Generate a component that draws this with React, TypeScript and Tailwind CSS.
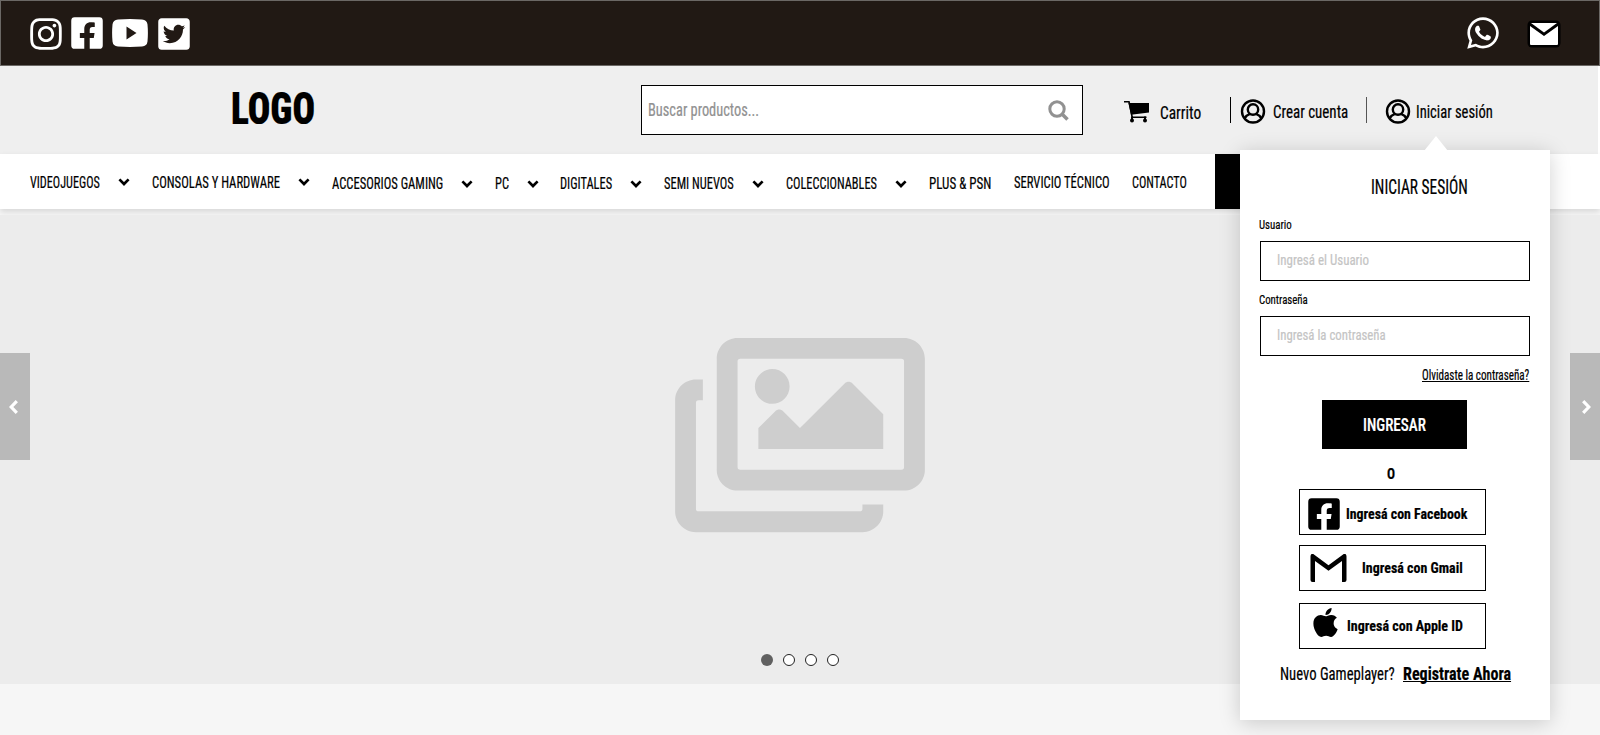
import { useLayoutEffect, useRef, useState } from "react";
import type { ReactNode } from "react";
import { FaApple, FaFacebookSquare, FaInstagram, FaRegImages, FaTwitterSquare, FaWhatsapp } from "react-icons/fa";

/** Narrow label: squeezes its text horizontally into the width set by its class. */
function Label({ className, children }: { className: string; children: ReactNode }) {
  const outer = useRef<HTMLSpanElement>(null);
  const inner = useRef<HTMLSpanElement>(null);
  const [scale, setScale] = useState(1);
  useLayoutEffect(() => {
    if (outer.current && inner.current) setScale(outer.current.clientWidth / inner.current.offsetWidth);
  }, []);
  return (
    <span ref={outer} className={`flex shrink-0 ${className}`}>
      <span ref={inner} className="shrink-0 origin-left whitespace-nowrap" style={{ transform: `scaleX(${scale})` }}>
        {children}
      </span>
    </span>
  );
}

function Chevron({ className }: { className: string }) {
  return (
    <svg viewBox="0 0 12 8" className={`h-2 w-3 shrink-0 ${className}`} fill="none" stroke="black" strokeWidth="2.7">
      <path d="M1.400 1.400 6 6 10.600 1.400" />
    </svg>
  );
}

function UserIcon({ className }: { className: string }) {
  return (
    <svg viewBox="0 0 26 26" className={`size-[26px] shrink-0 ${className}`} fill="none" stroke="black" strokeWidth="2.4">
      <circle cx="13" cy="12.500" r="11" />
      <circle cx="13" cy="10.500" r="5.200" />
      <path d="M4.600 19.500c1.200-2.400 3-3.800 5.400-4.600M21.400 19.500c-1.200-2.400-3-3.800-5.400-4.600" />
    </svg>
  );
}

function YoutubeIcon() {
  return (
    <svg viewBox="0 0 36 28" className="ml-[7px] h-7 w-9 shrink-0">
      <path
        fill="white"
        fillRule="evenodd"
        d="M6 .5Q18-.3 30 .5Q35 1 35.500 5.500Q36.300 14 35.500 22.500Q35 27 30 27.500Q18 28.300 6 27.500Q1 27 .5 22.500Q-.3 14 .5 5.500Q1 1 6 .5ZM14.500 7.500V20.500L24.500 14Z"
      />
    </svg>
  );
}

function MailIcon() {
  return (
    <svg viewBox="0 0 34 28" className="ml-[26px] mt-[2px] h-7 w-[34px] shrink-0">
      <rect x=".5" y=".5" width="33" height="27" rx="4.500" fill="black" />
      <path d="M4 3H30L17 12.500Z" fill="white" />
      <path d="M3 6 17 16 31 6V24Q31 25 30 25H4Q3 25 3 24Z" fill="white" />
    </svg>
  );
}

function CartIcon() {
  return (
    <svg viewBox="0 0 25 22" className="ml-[41px] mt-[4px] h-[22px] w-[25px] shrink-0">
      <path d="M0 .8H5L8.200 16.200H22.500" fill="none" stroke="black" strokeWidth="1.600" />
      <path d="M4.500 2H25V11.500L7 13.800Z" />
      <circle cx="8" cy="19.600" r="2" />
      <circle cx="21" cy="19.600" r="2" />
      <path d="M7 15.400H9V19H7ZM20 15.400H22V19H20Z" />
    </svg>
  );
}

function GmailIcon() {
  return (
    <svg viewBox="0 0 37 28" className="h-7 w-[37px] shrink-0">
      <path d="M2.500 28Q.5 28 .5 26V2.500Q.5-.5 3-.2L18.500 11.200 34-.2Q36.500-.5 36.500 2.500V26Q36.500 28 34.500 28H32V7L18.500 16.800 5 7V28Z" />
    </svg>
  );
}

function Arrow({ right = false }: { right?: boolean }) {
  return (
    <button className={`mt-[138px] flex h-[107px] w-[30px] items-center self-start bg-[#b9b9b9] ${right ? "pl-3" : "pl-[9px]"}`}>
      <svg viewBox="0 0 9 14" className="h-[14px] w-[9px]" fill="none" stroke="white" strokeWidth="3.2">
        <path d={right ? "M1.200 1.200 6.800 7 1.200 12.800" : "M7.800 1.200 2.200 7 7.800 12.800"} />
      </svg>
    </button>
  );
}

const nav = [
  { text: "VIDEOJUEGOS", box: "ml-[30px] mt-[3px] w-[70px]", chevron: "ml-[18px] mt-px" },
  { text: "CONSOLAS Y HARDWARE", box: "ml-[22px] mt-[3px] w-[128px]", chevron: "ml-[18px] mt-px" },
  { text: "ACCESORIOS GAMING", box: "ml-[22px] mt-[5px] w-[111px]", chevron: "ml-[18px] mt-[5px]" },
  { text: "PC", box: "ml-[22px] mt-[5px] w-[14px]", chevron: "ml-[18px] mt-[5px]" },
  { text: "DIGITALES", box: "ml-[21px] mt-[5px] w-[52px]", chevron: "ml-[18px] mt-[5px]" },
  { text: "SEMI NUEVOS", box: "ml-[22px] mt-[5px] w-[70px]", chevron: "ml-[18px] mt-[5px]" },
  { text: "COLECCIONABLES", box: "ml-[22px] mt-[5px] w-[91px]", chevron: "ml-[18px] mt-[5px]" },
  { text: "PLUS & PSN", box: "ml-[22px] mt-[5px] w-[62px]" },
  { text: "SERVICIO TÉCNICO", box: "ml-[23px] mt-[3px] w-[96px]" },
  { text: "CONTACTO", box: "ml-[22px] mt-[3px] w-[55px]" },
];

function LoginPanel() {
  return (
    <section className="absolute left-[1240px] top-[150px] flex h-[570px] w-[310px] flex-col bg-white shadow-[0_3px_20px_rgba(0,0,0,0.18)]">
      <svg viewBox="0 0 24 15" className="absolute -top-[14px] left-[184px] h-[15px] w-6">
        <path d="M12 0 24 15H0Z" fill="white" />
      </svg>
      <Label className="ml-[131px] mt-[27px] h-5 w-[97px] text-[20px] leading-5">INICIAR SESIÓN</Label>
      <Label className="ml-[19px] mt-[19px] h-4 w-[33px] text-[13.500px] leading-4">Usuario</Label>
      <div className="ml-5 mt-[9px] flex h-10 w-[270px] items-center border border-black pl-4">
        <Label className="-mt-[3px] w-[92px] text-[15.500px] leading-5 text-[#c4c4c4]">Ingresá el Usuario</Label>
      </div>
      <Label className="ml-[19px] mt-[10px] h-4 w-[49px] text-[13.500px] leading-4">Contraseña</Label>
      <div className="ml-5 mt-[9px] flex h-10 w-[270px] items-center border border-black pl-4">
        <Label className="-mt-[3px] w-[109px] text-[15.500px] leading-5 text-[#c4c4c4]">Ingresá la contraseña</Label>
      </div>
      <Label className="ml-[182px] mt-[11px] h-4 w-[107px] text-[14px] leading-4 underline decoration-1 underline-offset-1 [text-decoration-skip-ink:none]">
        Olvidaste la contraseña?
      </Label>
      <button className="ml-[82px] mt-[17px] flex h-[49px] w-[145px] items-center bg-black pl-[41px] text-white">
        <Label className="w-[63px] text-[18px] font-medium leading-6">INGRESAR</Label>
      </button>
      <Label className="ml-[147px] mt-[17px] h-4 w-2 text-[15px] font-bold leading-4">O</Label>
      <button className="ml-[59px] mt-[7px] flex h-[46px] w-[187px] items-center border border-black pl-[6px]">
        <FaFacebookSquare className="mt-[3px] size-[36px] shrink-0" />
        <Label className="ml-1 mt-[3px] w-[121px] text-[15.500px] font-bold leading-5">Ingresá con Facebook</Label>
      </button>
      <button className="ml-[59px] mt-[10px] flex h-[46px] w-[187px] items-center border border-black pl-[10px]">
        <GmailIcon />
        <Label className="-mt-px ml-[15px] w-[101px] text-[15.500px] font-bold leading-5">Ingresá con Gmail</Label>
      </button>
      <button className="ml-[59px] mt-3 flex h-[46px] w-[187px] items-center border border-black pl-[9px]">
        <FaApple className="-mt-[7px] size-[33px] shrink-0" />
        <Label className="-mt-px ml-[5px] w-[116px] text-[15.500px] font-bold leading-5">Ingresá con Apple ID</Label>
      </button>
      <div className="ml-10 mt-[13px] flex">
        <Label className="w-[115px] text-[18px] leading-6">Nuevo Gameplayer?</Label>
        <Label className="ml-2 w-[108px] text-[18px] font-bold leading-6 underline decoration-1 underline-offset-1 [text-decoration-skip-ink:none]">
          Registrate Ahora
        </Label>
      </div>
    </section>
  );
}

export default function App() {
  return (
    <div className="relative flex h-[735px] w-[1600px] flex-col overflow-hidden bg-[#f6f6f6] font-['Roboto_Condensed','Roboto',sans-serif] font-normal text-black [-webkit-text-stroke-width:0.2px] [font-stretch:75%]">
      <header className="flex h-[66px] shrink-0 items-center border border-[#6b6865] bg-[#211914] text-white">
        <FaInstagram className="ml-[27px] mt-[2px] size-[36px] shrink-0" />
        <FaFacebookSquare className="ml-[5px] size-[36px] shrink-0" />
        <YoutubeIcon />
        <FaTwitterSquare className="ml-2 mt-[2px] size-[36px] shrink-0" />
        <FaWhatsapp className="ml-[1273px] size-[36px] shrink-0" />
        <MailIcon />
      </header>

      <div className="mr-[2px] flex h-[88px] shrink-0 items-center bg-[#efefef] shadow-[2px_0_0_white]">
        <Label className="-mt-1 ml-[231px] w-[84px] text-[45px] font-black leading-none">LOGO</Label>
        <div className="ml-[326px] flex h-[50px] w-[442px] items-center justify-between border border-black bg-white pl-[6px] pr-[13px]">
          <Label className="w-[111px] text-[18px] font-normal leading-6 text-[#919191]">Buscar productos...</Label>
          <svg viewBox="0 0 21 21" className="size-[21px]" fill="none" stroke="#919191">
            <circle cx="9" cy="9" r="7.200" strokeWidth="3" />
            <path d="M14 14 19.500 19.500" strokeWidth="3.600" />
          </svg>
        </div>
        <CartIcon />
        <Label className="ml-[11px] mt-[5px] w-[41px] text-[18px] leading-6">Carrito</Label>
        <span className="ml-[29px] h-[26px] w-px shrink-0 bg-black" />
        <UserIcon className="ml-[9px] mt-[3px]" />
        <Label className="ml-[7px] mt-[3px] w-[75px] text-[18px] leading-6">Crear cuenta</Label>
        <span className="ml-[18px] h-[26px] w-px shrink-0 bg-[#555]" />
        <UserIcon className="ml-[18px] mt-[3px]" />
        <Label className="ml-[5px] mt-[3px] w-[77px] text-[18px] leading-6">Iniciar sesión</Label>
      </div>

      <nav className="flex h-[55px] shrink-0 items-center bg-white shadow-[0_3px_6px_rgba(0,0,0,0.12)]">
        {nav.map((item) => (
          <div key={item.text} className="flex h-full items-center">
            <Label className={`text-[16px] leading-5 ${item.box}`}>{item.text}</Label>
            {item.chevron && <Chevron className={item.chevron} />}
          </div>
        ))}
        <span className="ml-7 h-full w-[100px] bg-black" />
      </nav>

      <main className="mt-[6px] flex h-[469px] shrink-0 justify-between bg-[#ececec]">
        <Arrow />
        <div className="flex flex-col items-center">
          <FaRegImages className="mt-[109px] h-[222px] w-[250px] text-[#cecece]" />
          <div className="mt-[108px] flex gap-[10px]">
            <span className="size-3 rounded-full bg-[#606060]" />
            <span className="size-3 rounded-full border border-[#222] bg-white" />
            <span className="size-3 rounded-full border border-[#222] bg-white" />
            <span className="size-3 rounded-full border border-[#222] bg-white" />
          </div>
        </div>
        <Arrow right />
      </main>

      <LoginPanel />
    </div>
  );
}
